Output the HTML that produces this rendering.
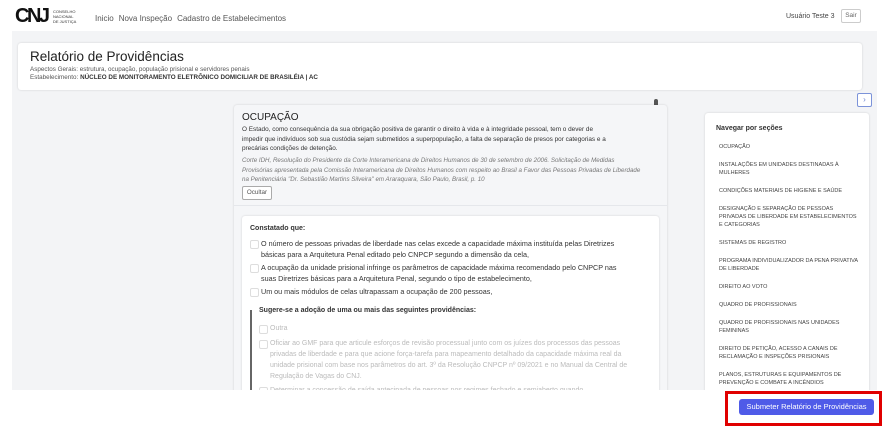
<!DOCTYPE html><html><head><meta charset="utf-8"><style>
*{box-sizing:border-box;margin:0;padding:0}
body{width:892px;height:435px;overflow:hidden;background:#fff;font-family:"Liberation Sans",sans-serif;position:relative;color:#222}
.a{position:absolute}
.nav a{color:#555;font-size:8px;margin-right:5px}
.gray{left:12px;top:31px;width:865px;height:359px;background:#f3f4f6;overflow:hidden}
.card{background:#fff;border-radius:3px;box-shadow:0 0 2px rgba(0,0,0,.15)}
.navs div{font-size:5.5px;color:#444;line-height:8px;margin-bottom:10px}
.cb{position:relative;padding-left:11px}
.cb:before{content:"";position:absolute;left:0;top:2px;width:7px;height:7px;border:1px solid #ddd;border-radius:2px}
</style></head><body>
<div class="a" style="left:15px;top:5px;font-weight:900;font-size:20px;letter-spacing:-2.5px;color:#111">CNJ</div>
<div class="a" style="left:53px;top:9px;font-size:4px;line-height:5px;color:#333">CONSELHO<br>NACIONAL<br>DE JUSTIÇA</div>
<div class="a nav" style="left:95px;top:8px"><a>Inicio</a><a>Nova Inspeção</a><a>Cadastro de Estabelecimentos</a></div>
<div class="a" style="left:786px;top:13px;font-size:7px;color:#444">Usuário Teste 3</div>
<div class="a" style="left:841px;top:9px;width:20px;height:14px;border:1px solid #ccc;border-radius:2px;font-size:6.5px;color:#666;text-align:center;line-height:12px">Sair</div>
<div class="a gray">
 <div class="a card" style="left:6px;top:12px;width:844px;height:47px">
  <div class="a" style="left:12px;top:6px;font-size:13.5px;color:#222">Relatório de Providências</div>
  <div class="a" style="left:12px;top:23px;font-size:6.3px;color:#555">Aspectos Gerais: estrutura, ocupação, população prisional e servidores penais</div>
  <div class="a" style="left:12px;top:31px;font-size:6.3px;color:#555">Estabelecimento: <b style="color:#333">NÚCLEO DE MONITORAMENTO ELETRÔNICO DOMICILIAR DE BRASILÉIA | AC</b></div>
 </div>
 <div class="a" style="left:845px;top:62px;width:15px;height:14px;border:1px solid #7c93d9;border-radius:2px;background:#fff;color:#6d86d0;font-size:8px;text-align:center;line-height:12px">›</div>
 <div class="a" style="left:642px;top:68px;width:4px;height:16px;background:#555;border-radius:2px"></div>
 <div class="a card" style="left:222px;top:74px;width:433px;height:300px;background:#f5f6f8">
  <div class="a" style="left:8px;top:7px;font-size:10px;color:#222">OCUPAÇÃO</div>
  <div class="a" style="left:8px;top:20px;width:368px;font-size:6.4px;line-height:9.7px;color:#333">O Estado, como consequência da sua obrigação positiva de garantir o direito à vida e à integridade pessoal, tem o dever de impedir que indivíduos sob sua custódia sejam submetidos a superpopulação, a falta de separação de presos por categorias e a precárias condições de detenção.</div>
  <div class="a" style="left:8px;top:51px;width:402px;font-size:6.2px;line-height:9.7px;color:#777;font-style:italic">Corte IDH, Resolução do Presidente da Corte Interamericana de Direitos Humanos de 30 de setembro de 2006. Solicitação de Medidas Provisórias apresentada pela Comissão Interamericana de Direitos Humanos com respeito ao Brasil a Favor das Pessoas Privadas de Liberdade na Penitenciária "Dr. Sebastião Martins Silveira" em Araraquara, São Paulo, Brasil, p. 10</div>
  <div class="a" style="left:8px;top:81px;width:30px;height:14px;border:1px solid #aaa;border-radius:2px;background:#fff;font-size:6.3px;color:#555;text-align:center;line-height:12px">Ocultar</div>
  <div class="a" style="left:0;top:100px;width:433px;border-top:1px solid #e5e7eb"></div>
  <div class="a card" style="left:8px;top:111px;width:417px;height:200px">
   <div class="a" style="left:8px;top:9px;font-size:7px;font-weight:bold;color:#333">Constatado que:</div>
   <div class="a" style="left:8px;top:22px;width:375px;font-size:7.2px;line-height:11px;color:#333">
    <div class="cb" style="margin-bottom:2px">O número de pessoas privadas de liberdade nas celas excede a capacidade máxima instituída pelas Diretrizes básicas para a Arquitetura Penal editado pelo CNPCP segundo a dimensão da cela,</div>
    <div class="cb" style="margin-bottom:2px">A ocupação da unidade prisional infringe os parâmetros de capacidade máxima recomendado pelo CNPCP nas suas Diretrizes básicas para a Arquitetura Penal, segundo o tipo de estabelecimento,</div>
    <div class="cb">Um ou mais módulos de celas ultrapassam a ocupação de 200 pessoas,</div>
   </div>
   <div class="a" style="left:8px;top:94px;width:2px;height:110px;background:#666"></div>
   <div class="a" style="left:17px;top:91px;font-size:7px;font-weight:bold;color:#333">Sugere-se a adoção de uma ou mais das seguintes providências:</div>
   <div class="a" style="left:17px;top:107px;width:370px;font-size:7px;line-height:11px;color:#bbb"><div class="cb" style="margin-bottom:4px">Outra</div><div class="cb">Oficiar ao GMF para que articule esforços de revisão processual junto com os juízes dos processos das pessoas privadas de liberdade e para que acione força-tarefa para mapeamento detalhado da capacidade máxima real da unidade prisional com base nos parâmetros do art. 3º da Resolução CNPCP nº 09/2021 e no Manual da Central de Regulação de Vagas do CNJ.</div><div class="cb" style="margin-top:3px">Determinar a concessão de saída antecipada de pessoas nos regimes fechado e semiaberto quando</div></div>
  </div>
 </div>
 <div class="a card navs" style="left:693px;top:82px;width:164px;height:300px;padding:12px 8px 0 11px">
  <div style="font-size:7px;font-weight:bold;color:#333;margin-bottom:10px">Navegar por seções</div>
  <div style="padding-left:3px">
  <div>OCUPAÇÃO</div><div>INSTALAÇÕES EM UNIDADES DESTINADAS À MULHERES</div><div>CONDIÇÕES MATERIAIS DE HIGIENE E SAÚDE</div><div>DESIGNAÇÃO E SEPARAÇÃO DE PESSOAS PRIVADAS DE LIBERDADE EM ESTABELECIMENTOS E CATEGORIAS</div><div>SISTEMAS DE REGISTRO</div><div>PROGRAMA INDIVIDUALIZADOR DA PENA PRIVATIVA DE LIBERDADE</div><div>DIREITO AO VOTO</div><div>QUADRO DE PROFISSIONAIS</div><div>QUADRO DE PROFISSIONAIS NAS UNIDADES FEMININAS</div><div>DIREITO DE PETIÇÃO, ACESSO A CANAIS DE RECLAMAÇÃO E INSPEÇÕES PRISIONAIS</div><div>PLANOS, ESTRUTURAS E EQUIPAMENTOS DE PREVENÇÃO E COMBATE A INCÊNDIOS</div>
  </div>
 </div>
</div>
<div class="a" style="left:725px;top:391px;width:157px;height:35px;border:3px solid #e00000"></div>
<div class="a" style="left:739px;top:399px;width:135px;height:16px;background:#4f5be8;border-radius:3px;color:#fff;font-size:7.5px;text-align:center;line-height:16px">Submeter Relatório de Providências</div>
</body></html>
